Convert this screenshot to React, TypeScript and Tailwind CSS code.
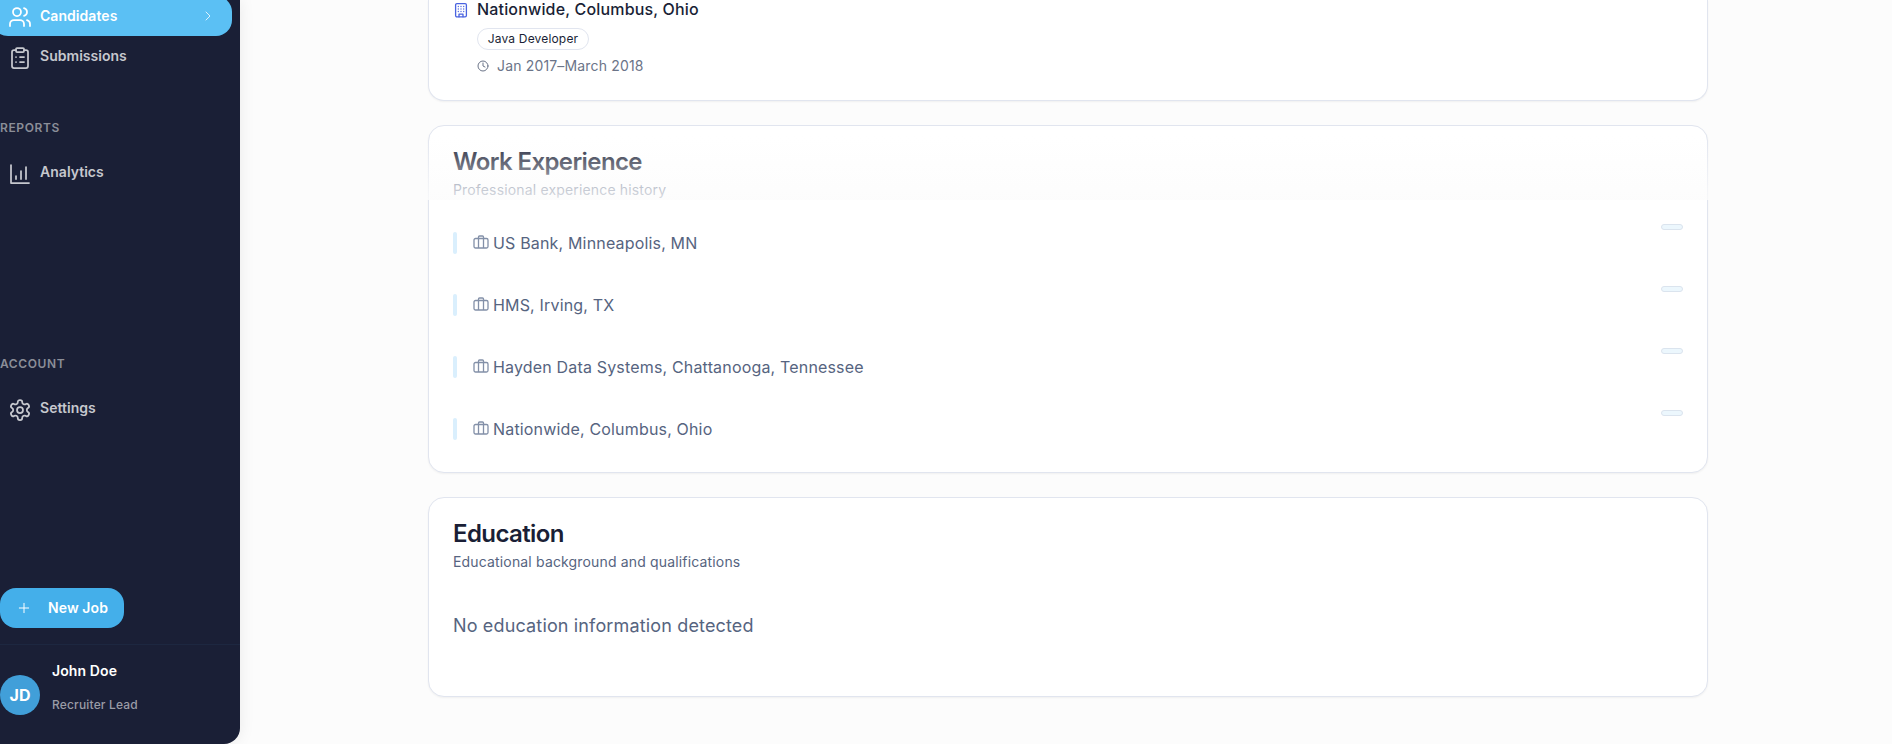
import React from "react";
import { Users, ClipboardList, ChevronRight, Plus, Clock } from "lucide-react";

const jobs = [
  "US Bank, Minneapolis, MN",
  "HMS, Irving, TX",
  "Hayden Data Systems, Chattanooga, Tennessee",
  "Nationwide, Columbus, Ohio",
];

function ChartIcon() {
  return (
    <svg width="24" height="24" viewBox="0 0 24 24" fill="none" stroke="currentColor" strokeWidth="1.75" strokeLinecap="round" strokeLinejoin="round">
      <path d="M3 3v18h18" />
      <path d="M13 17V9" />
      <path d="M18 17V5" />
      <path d="M8 17v-3" />
    </svg>
  );
}

function GearIcon() {
  return (
    <svg width="24" height="24" viewBox="0 0 24 24" fill="none" stroke="currentColor" strokeWidth="1.75" strokeLinecap="round" strokeLinejoin="round">
      <path d="M12.22 2h-.44a2 2 0 0 0-2 2v.18a2 2 0 0 1-1 1.73l-.43.25a2 2 0 0 1-2 0l-.15-.08a2 2 0 0 0-2.73.73l-.22.38a2 2 0 0 0 .73 2.73l.15.1a2 2 0 0 1 1 1.72v.51a2 2 0 0 1-1 1.74l-.15.09a2 2 0 0 0-.73 2.73l.22.38a2 2 0 0 0 2.73.73l.15-.08a2 2 0 0 1 2 0l.43.25a2 2 0 0 1 1 1.73V20a2 2 0 0 0 2 2h.44a2 2 0 0 0 2-2v-.18a2 2 0 0 1 1-1.73l.43-.25a2 2 0 0 1 2 0l.15.08a2 2 0 0 0 2.73-.73l.22-.39a2 2 0 0 0-.73-2.73l-.15-.08a2 2 0 0 1-1-1.74v-.5a2 2 0 0 1 1-1.74l.15-.09a2 2 0 0 0 .73-2.73l-.22-.38a2 2 0 0 0-2.73-.73l-.15.08a2 2 0 0 1-2 0l-.43-.25a2 2 0 0 1-1-1.73V4a2 2 0 0 0-2-2z" />
      <circle cx="12" cy="12" r="3" />
    </svg>
  );
}

function LuggageIcon() {
  return (
    <svg width="16" height="16" viewBox="0 0 16 16" fill="none" stroke="currentColor" strokeWidth="1.3" strokeLinejoin="round">
      <rect x="1" y="3.5" width="14" height="9.5" rx="1.5" />
      <path d="M5.5 13V2a1 1 0 0 1 1-1h3a1 1 0 0 1 1 1V13" />
    </svg>
  );
}

function BuildingIcon() {
  return (
    <svg width="16" height="16" viewBox="0 0 16 16" fill="none" stroke="currentColor" strokeWidth="1.3" strokeLinecap="round" strokeLinejoin="round">
      <rect x="2.6" y="1.6" width="10.8" height="13.2" rx="1.3" />
      <path d="M6 14.8v-2.6h4v2.6" />
      <path d="M5.3 4.5h.01M8 4.5h.01M10.7 4.5h.01M5.3 7h.01M8 7h.01M10.7 7h.01M5.3 9.5h.01M8 9.5h.01M10.7 9.5h.01" />
    </svg>
  );
}

function NavItem({ icon, label }: { icon: React.ReactNode; label: string }) {
  return (
    <div className="flex h-10 items-start pl-2 text-[#c6c8ce]">
      <div className="pt-2">{icon}</div>
      <span className="pt-2 pl-2 text-sm leading-5 font-semibold tracking-[0.03px]">{label}</span>
    </div>
  );
}

function Sidebar() {
  return (
    <aside className="flex h-[744px] w-60 shrink-0 flex-col overflow-hidden rounded-br-2xl bg-[#1a1f36] shadow-[0_0_16px_rgba(0,0,0,0.08)]">
      <div className="-mt-1 -ml-2 flex h-10 w-60 shrink-0 items-start rounded-2xl bg-[#5bc0f4] pl-4 text-white">
        <Users className="mt-[9px]" size={24} strokeWidth={1.75} />
        <span className="grow pt-[10px] pl-2 text-sm leading-5 font-semibold tracking-[0.05px]">Candidates</span>
        <ChevronRight className="mt-3 mr-4 opacity-80" size={16} strokeWidth={1.5} />
      </div>
      <div className="mt-[2px]">
        <NavItem icon={<ClipboardList size={24} strokeWidth={1.75} />} label="Submissions" />
      </div>
      <h3 className="mt-[42px] text-xs leading-4 font-semibold tracking-[0.6px] text-[#8b8e98]">REPORTS</h3>
      <div className="mt-[18px]">
        <NavItem icon={<ChartIcon />} label="Analytics" />
      </div>
      <h3 className="mt-[162px] text-xs leading-4 font-semibold tracking-[0.6px] text-[#8b8e98]">ACCOUNT</h3>
      <div className="mt-[18px]">
        <NavItem icon={<GearIcon />} label="Settings" />
      </div>
      <button className="mt-[158px] flex h-10 w-[124px] shrink-0 items-center rounded-2xl bg-[#44afea] pl-4 text-sm font-semibold tracking-[0.1px] text-white">
        <Plus size={16} strokeWidth={1.5} />
        <span className="pl-4">New Job</span>
      </button>
      <div className="mt-4 flex grow border-t border-[#1d2740]">
        <div className="mt-[30px] flex size-10 items-center justify-center rounded-full bg-[#419fd9] text-base font-bold text-white">JD</div>
        <div className="pl-3">
          <p className="mt-4 text-sm leading-5 font-semibold tracking-[0.1px] text-white">John Doe</p>
          <p className="mt-4 text-xs leading-4 font-medium tracking-[0.17px] text-[#9a9ca6]">Recruiter Lead</p>
        </div>
      </div>
    </aside>
  );
}

function CardHeader({ title, subtitle }: { title: string; subtitle: string }) {
  return (
    <header>
      <h2 className="text-2xl leading-6 font-semibold tracking-[-0.6px] text-[#1a1f36]">{title}</h2>
      <p className="mt-[6px] text-sm leading-5 tracking-[0.16px] text-[#566480]">{subtitle}</p>
    </header>
  );
}

export default function App() {
  return (
    <div className="flex h-[744px] w-[1892px] overflow-hidden bg-[#fcfcfc] font-['Inter',sans-serif]">
      <Sidebar />
      <main className="flex flex-col gap-6 pl-[188px]">
        <section className="h-[101px] w-[1280px] shrink-0 rounded-b-2xl border border-t-0 border-[#e1e5ef] bg-white pl-6 shadow-xs">
          <div className="flex items-start">
            <div className="mt-[2px] text-[#4a63e0]"><BuildingIcon /></div>
            <div className="pl-2">
              <p className="-mt-[3px] text-base leading-6 font-medium tracking-[0.17px] text-[#1a1f36]">Nationwide, Columbus, Ohio</p>
              <span className="mt-[7px] flex h-[22px] w-[112px] items-center justify-center rounded-full border border-[#e1e5ef] text-xs tracking-[0.17px] text-[#1a1f36]">Java Developer</span>
              <p className="mt-[6px] flex items-center text-sm leading-5 tracking-[0.16px] text-[#6b7488]">
                <Clock size={12} strokeWidth={2} />
                <span className="pl-2">Jan 2017–March 2018</span>
              </p>
            </div>
          </div>
        </section>
        <section className="relative h-[348px] w-[1280px] shrink-0 rounded-2xl border border-[#e1e5ef] bg-white px-6 pt-6 shadow-xs">
          <CardHeader title="Work Experience" subtitle="Professional experience history" />
          <div className="mt-8 flex flex-col gap-10">
            {jobs.map((job) => (
              <div key={job} className="flex h-[22px] items-center">
                <div className="h-[22px] w-1 rounded-sm bg-[#daeffd]" />
                <div className="pl-4 text-[#8390a8]"><LuggageIcon /></div>
                <span className="-mt-px grow pl-1 text-base leading-6 tracking-[0.17px] text-[#566480]">{job}</span>
                <span className="-mt-8 h-[6px] w-[22px] rounded-full border border-[#dbe4ee] bg-[#ecf7fd]" />
              </div>
            ))}
          </div>
          <div className="pointer-events-none absolute top-[10px] -right-2 -left-2 h-16 bg-linear-to-b from-[#fcfcfc]/0 to-[#fcfcfc]/80" />
        </section>
        <section className="h-[200px] w-[1280px] shrink-0 rounded-2xl border border-[#e1e5ef] bg-white px-6 pt-6 shadow-xs">
          <CardHeader title="Education" subtitle="Educational background and qualifications" />
          <p className="mt-10 text-lg leading-7 tracking-[0.15px] text-[#566480]">No education information detected</p>
        </section>
      </main>
    </div>
  );
}
